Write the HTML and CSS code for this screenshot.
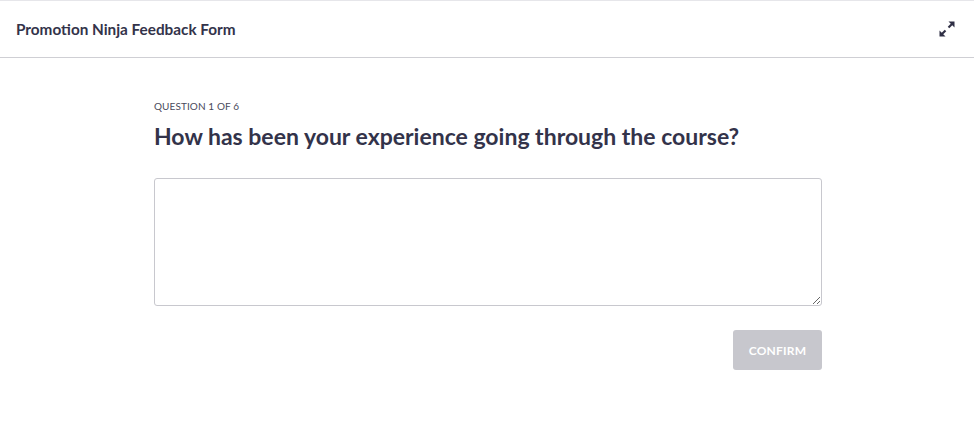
FILE: index.html
```html
<!DOCTYPE html>
<html>
<head>
<meta charset="utf-8">
<link rel="stylesheet" href="styles.css">
</head>
<body>
<div class="app">
  <header class="topbar">
    <div class="title">Promotion Ninja Feedback Form</div>
    <button class="expand" aria-label="Expand">
      <svg width="18" height="18" viewBox="0 0 18 18">
        <path d="M10.5 7.5 L14.5 3.5" stroke="#2f2f45" stroke-width="2.2" stroke-linecap="butt"/>
        <path d="M10.5 1.5 H16.5 V7.5 Z" fill="#2f2f45"/>
        <path d="M7.5 10.5 L3.5 14.5" stroke="#2f2f45" stroke-width="2.2" stroke-linecap="butt"/>
        <path d="M1.5 10.5 V16.5 H7.5 Z" fill="#2f2f45"/>
      </svg>
    </button>
  </header>
  <main class="content">
    <div class="question">
      <div class="counter">QUESTION 1 OF 6</div>
      <h1 class="prompt">How has been your experience going through the course?</h1>
      <textarea class="answer"></textarea>
      <div class="actions">
        <button class="confirm" disabled>CONFIRM</button>
      </div>
    </div>
  </main>
</div>
</body>
</html>
```
FILE: styles.css
```css
* { box-sizing: border-box; }
html, body { margin: 0; padding: 0; background: #fff; }
body { font-family: Lato, "Open Sans", sans-serif; color: #33334a; }
.app { border-top: 1px solid #e6e6ea; }
.topbar {
  height: 57px;
  display: flex;
  align-items: center;
  justify-content: space-between;
  padding: 0 18px 0 16px;
  border-bottom: 1px solid #cfcfd4;
}
.title { font-size: 15.3px; font-weight: 700; color: #33334a; }
.expand {
  border: 0; background: none; padding: 0;
  width: 18px; height: 18px; display: flex; cursor: pointer;
}
.content { display: flex; justify-content: center; padding-top: 41px; padding-left: 2px; }
.question { width: 668px; }
.counter { font-size: 10px; color: #4a4a5c; letter-spacing: 0.1px; line-height: 14px; }
.prompt {
  margin: 8px 0 0;
  font-size: 23px;
  font-weight: 700;
  line-height: 31px;
  color: #33334a;
}
.answer {
  display: block;
  margin-top: 26px;
  width: 668px;
  height: 128px;
  border: 1px solid #c8c8ce;
  border-radius: 3px;
  resize: vertical;
  font: inherit;
}
.actions { display: flex; justify-content: flex-end; margin-top: 24px; }
.confirm {
  width: 89px; height: 40px;
  border: 0; border-radius: 3px;
  background: #c7c7cd;
  color: #fff;
  font-family: inherit;
  font-size: 12px;
  font-weight: 700;
  letter-spacing: 0.2px;
}
```
